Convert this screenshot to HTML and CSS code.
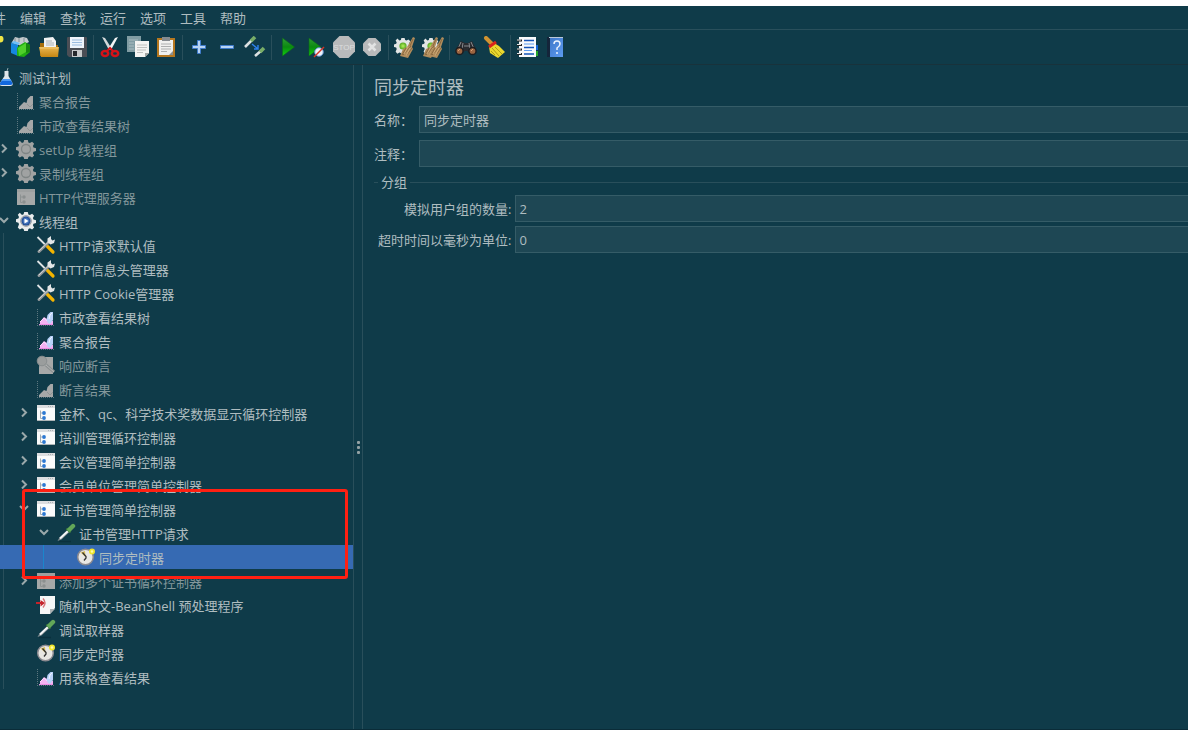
FILE: index.html
```
<!DOCTYPE html>
<html lang="zh-CN">
<head>
<meta charset="utf-8">
<title>同步定时器</title>
<link rel="stylesheet" href="styles.css">
</head>
<body>
<svg class="defs" aria-hidden="true">
  <defs>
    <linearGradient id="gGreen" x1="0" y1="0" x2="0" y2="1"><stop offset="0" stop-color="#2f9a35"/><stop offset=".5" stop-color="#0b8a10"/><stop offset="1" stop-color="#10d010"/></linearGradient>
    <linearGradient id="gFold" x1="0" y1="0" x2="0" y2="1"><stop offset="0" stop-color="#e9b650"/><stop offset="1" stop-color="#c58612"/></linearGradient>
    <linearGradient id="gBook" x1="0" y1="0" x2="1" y2="1"><stop offset="0" stop-color="#3f78c9"/><stop offset="1" stop-color="#5c9af0"/></linearGradient>
    <radialGradient id="gBall"><stop offset="0" stop-color="#b8f060"/><stop offset="1" stop-color="#4fa51c"/></radialGradient>
    <radialGradient id="gBlue"><stop offset="0" stop-color="#7fb0ee"/><stop offset="1" stop-color="#123f8c"/></radialGradient>
  </defs>
  <symbol id="flask" viewBox="0 0 20 20"><path d="M8.500 4h4v5l4 7q1 3-2 3H6q-3 0-2-3l4.500-7z" fill="#dfe6ea"/><path d="M7 12h7l2.500 4q.5 2-2 2H6q-3 0-2-2z" fill="#1268dd"/><path d="M6.500 12h8l1 2h-10z" fill="#4d9bf5"/><path d="M11 4l1-3" stroke="#8fa3aa"/></symbol>
  <symbol id="chart" viewBox="0 0 20 20"><path d="M1.500 2v17M1 18.500h17" stroke="#5d777f" stroke-dasharray="1 1"/><path d="M4 17v-2l4-5 3 2 6 2v4H3z" fill="#f3b2f2"/><path d="M4 15l4-4 3 3" fill="none" stroke="#fbdcfa"/><path d="M10.500 13l1-5 3-3h2.500v8l-3 4-2-1z" fill="#b9d2fa"/><path d="M13 12l1-4 2-2" fill="none" stroke="#eef5ff"/><path d="M3 17h14v1H3z" fill="#e98be2"/></symbol>
  <symbol id="chart-off" viewBox="0 0 20 20"><path d="M1.500 2v17M1 18.500h17" stroke="#5d777f" stroke-dasharray="1 1"/><path d="M3 18v-2l5-5 2.500 1 1-4 3-3h2.500v13z" fill="#a6a8a8"/><path d="M11 13l3 3 3-3" fill="none" stroke="#8f9494"/></symbol>
  <symbol id="gear" viewBox="0 0 20 20"><path d="M8.200 1h3.600l.6 2.400 1.500.6 2.200-1.200 2 2-1.200 2.200.6 1.600 2.500.6v2.800l-2.500.7-.6 1.600 1.200 2.200-2 2-2.200-1.200-1.500.6-.6 2.100H8.200l-.6-2.100-1.600-.6-2.200 1.200-2-2L3 13.300l-.6-1.600L0 11V8.200l2.400-.6L3 6 1.800 3.800l2-2L6 3.900l1.600-.6z"/></symbol>
  <symbol id="gear-off" viewBox="0 0 20 20"><use href="#gear" fill="#a0a2a2"/><circle cx="10" cy="10" r="4.500" fill="#a0a2a2" stroke="#7f8585" stroke-width="1.300"/></symbol>
  <symbol id="gear-on" viewBox="0 0 20 20"><use href="#gear" fill="#e9ebec"/><circle cx="10" cy="10" r="5.300" fill="#c9ced4" stroke="#91979d"/><circle cx="10" cy="10" r="4.500" fill="url(#gBlue)"/><path d="M8.500 7.500l4 2.500-4 2.500z" fill="#fff"/></symbol>
  <symbol id="tools" viewBox="0 0 20 20"><path d="M1.500 2l9 9" stroke="#dfe4e6" stroke-width="1.800"/><path d="M11.500 11.500l5.500 5.500" stroke="#f4b400" stroke-width="3.200" stroke-linecap="round"/><path d="M3 16.500L13 7" stroke="#8f9597" stroke-width="3" stroke-linecap="round"/><path d="M3 16L13 6.500" stroke="#d3d7d8" stroke-width="1" stroke-linecap="round"/><path d="M11.500 7V3.500L15 1v3l1.500 1.500L19 4.500 18 8l-3.500 1.500z" fill="#e3e6e7"/></symbol>
  <symbol id="assert" viewBox="0 0 20 20"><path d="M4 2h13v17H3v-6z" fill="#a6a8a8"/><circle cx="6" cy="6" r="4.800" fill="#9a9d9d" stroke="#888e8f"/><path d="M10 10l8 7" stroke="#8b9091" stroke-width="3"/><path d="M10 10l8 7" stroke="#b3b5b5"/></symbol>
  <symbol id="ctl" viewBox="0 0 20 20"><path d="M1 2h18v16H1z" fill="#fafbfb"/><path d="M1 2h18v3H1z" fill="#dcdee0"/><path d="M1 17h18v1H1z" fill="#aeb5b7"/><path d="M12 3.500h1m1 0h1m1 0h1" stroke="#b0b5b8"/><path d="M4.500 7.500v8h2M4.500 10h2" fill="none" stroke="#a3acb4"/><circle cx="8" cy="10" r="1.900" fill="#2c78d2"/><circle cx="8" cy="15" r="1.900" fill="#2c78d2"/></symbol>
  <symbol id="ctl-off" viewBox="0 0 20 20"><path d="M1 2h18v16H1z" fill="#a6a8a8"/><path d="M1 2h18v3H1z" fill="#9da0a0"/><path d="M4.500 7.500v8h2M4.500 10h2" fill="none" stroke="#8d9292"/><circle cx="8" cy="10" r="1.700" fill="#8a8f8f"/><circle cx="8" cy="15" r="1.700" fill="#8a8f8f"/></symbol>
  <symbol id="pipette" viewBox="0 0 20 20"><path d="M3 18.500h12" stroke="#0a303d" stroke-width="1.500"/><path d="M1.500 18l2-3.500L12 6.500l2 2-8.500 8z" fill="#7f8b90"/><path d="M4 15.500l8-7.500" stroke="#f4f6f7" stroke-width="2"/><path d="M10.500 5.500l4 4" stroke="#3f7f3c" stroke-width="2.200"/><path d="M13.500 6.500l3.500-3.500" stroke="#63a758" stroke-width="4.400" stroke-linecap="round"/></symbol>
  <symbol id="clock" viewBox="0 0 20 20"><circle cx="9.500" cy="10" r="7.800" fill="#e9e7e3" stroke="#8c8a90" stroke-width="1.500"/><path d="M9.500 10L4.500 5.500 9 4z" fill="#dcbd5a"/><path d="M6.500 5.500l3.500 4v1.500l-2 2.500" stroke="#333" fill="none" stroke-width="1.300"/><circle cx="16" cy="4.500" r="3" fill="#f0e52c"/><circle cx="16" cy="4.500" r="1.300" fill="#fffca8"/></symbol>
  <symbol id="pre" viewBox="0 0 20 20"><path d="M4 1h15v12l-5 6H4z" fill="#f6f7f7"/><path d="M14 19v-5h5z" fill="#abb1b3"/><path d="M0 7h4.500V5L9 8l-4.500 3.500V9H0z" fill="#c5232b"/><path d="M7 3.500q4 4.500 0 9" stroke="#d9777b" stroke-width="1.500" fill="none"/></symbol>
  <symbol id="right" viewBox="0 0 14 14"><path d="M5 2.500l4 4-4 4" fill="none" stroke="#9aa8aa" stroke-width="2"/></symbol>
  <symbol id="down" viewBox="0 0 14 14"><path d="M3 4l4 4 4-4" fill="none" stroke="#9aa8aa" stroke-width="2"/></symbol>
  <symbol id="brush" viewBox="0 0 22 22"><path d="M18 1l2 1-3 9 1 2-5 9-8-2 3-7 4-2z" fill="#b08c5c"/><path d="M16 10l-8 9M17 12l-6 8M11 12l-4 7M18 3l-3 7" stroke="#806039" stroke-width=".8"/><path d="M13 11l-4 7M15 12l-4 8" stroke="#d9b783" stroke-width=".8"/></symbol>
</svg>

<header class="top">
  <nav class="menu" aria-label="菜单">
    <button>文件</button><button>编辑</button><button>查找</button><button>运行</button><button>选项</button><button>工具</button><button>帮助</button>
  </nav>
  <div class="toolbar" role="toolbar">
    <button aria-label="新建"><svg viewBox="0 0 22 22"><path d="M3 2h15v18H3z" fill="#f5f6f4"/><circle cx="18" cy="3" r="3.500" fill="#eee545"/></svg></button>
    <button aria-label="模板"><svg viewBox="0 0 22 22"><path d="M2 6l3-5 4 1 4-1 4 1 2 4-8 4z" fill="#c4cacd"/><path d="M5 2v4m4-4v4m5-4v4" stroke="#829098"/><path d="M1 7l7 2v11l-7-3z" fill="#1687df"/><path d="M1 7l3-2 6 2-2 2z" fill="#6dc0fa"/><path d="M7 12l3-3 5-3 5 3v7l-6 5-7-1z" fill="#21ad12"/><path d="M8 12l8-5v9l-7 4z" fill="#4fd02a"/><path d="M16 7l4 2v7l-4 1z" fill="#16870e"/></svg></button>
    <button aria-label="打开"><svg viewBox="0 0 22 22"><path d="M2 7h5l1 2h12v11H2z" fill="#a86f0b"/><path d="M6 2l9-1 3 4v9H6z" fill="#f1f3f4"/><path d="M8 5h6M8 7h8M8 9h8" stroke="#a9b0b4"/><path d="M1 11h20l-1 10H3z" fill="url(#gFold)"/><path d="M2 12h18" stroke="#f3cb74"/></svg></button>
    <button aria-label="保存"><svg viewBox="0 0 22 22"><path d="M2 1h18q1 0 1 1v19H3l-2-2V2q0-1 1-1z" fill="#4b4e55"/><path d="M4 1h14v11H4z" fill="#eef4fb"/><path d="M6 4h10M6 6.500h10M6 9h10" stroke="#9bbce0"/><path d="M6 14h10v7H6z" fill="#c7cacb"/><path d="M7 15h4v5H7z" fill="#25282c"/></svg></button>
    <i class="sep"></i>
    <button aria-label="剪切"><svg viewBox="0 0 22 22"><path d="M3 1l3 1 7 11-3 1z" fill="#d3d8da"/><path d="M19 1l-3 1-7 11 3 1z" fill="#f4f5f5"/><ellipse cx="6" cy="17.500" rx="3.200" ry="2.600" fill="none" stroke="#d61218" stroke-width="2.500"/><ellipse cx="16" cy="17.500" rx="3.200" ry="2.600" fill="none" stroke="#d61218" stroke-width="2.500"/><path d="M8 15l3-3 3 3" fill="none" stroke="#d61218" stroke-width="2"/></svg></button>
    <button aria-label="复制"><svg viewBox="0 0 22 22"><path d="M0 0h14v16H0z" fill="#809ca3"/><path d="M2 4h9M2 7h5M2 10h5M2 13h5" stroke="#a9bcc0"/><path d="M8 5h14v12l-4 4H8z" fill="#f4f4f2"/><path d="M10 9h10M10 11.500h10M10 14h9M10 16.500h6" stroke="#c0c2c0"/><path d="M18 21v-4h4z" fill="#a5a7a4"/></svg></button>
    <button aria-label="粘贴"><svg viewBox="0 0 22 22"><path d="M2 2h18v19H2z" fill="#b67820"/><path d="M4 4h14v15H4z" fill="#f0f1ef"/><path d="M7 1h8v4H7z" fill="#858b8f"/><path d="M6 8h10M6 10.500h10M6 13h10M6 15.500h6" stroke="#adb0b0"/><path d="M14 19l4-4v4z" fill="#8c8f8f"/></svg></button>
    <i class="sep"></i>
    <button aria-label="展开"><svg viewBox="0 0 22 22"><path d="M9.500 4.500h3v5h5v3h-5v5h-3v-5h-5v-3h5z" fill="#b8d4f5" stroke="#3e7bcb"/></svg></button>
    <button aria-label="折叠"><svg viewBox="0 0 22 22"><path d="M4.500 9.500h13v3h-13z" fill="#b8d4f5" stroke="#3e7bcb"/></svg></button>
    <button aria-label="切换"><svg viewBox="0 0 22 22"><path d="M1 11l7-7M11 20l7-6" stroke="#dce1e2" stroke-width="2.600"/><path d="M7 5l4-4M16 16l4-4" stroke="#78ad68" stroke-width="3.600"/><path d="M8 8l6 5M14 9v4h-4" stroke="#2e82ed" stroke-width="1.400" fill="none"/></svg></button>
    <i class="sep"></i>
    <button aria-label="启动"><svg viewBox="0 0 22 22"><path d="M5.500 2l12 9-12 9z" fill="url(#gGreen)" stroke="#0b6a1a" stroke-width=".6"/></svg></button>
    <button aria-label="不停顿开始"><svg viewBox="0 0 22 22"><path d="M4 2l12 9-12 9z" fill="url(#gGreen)" stroke="#0b6a1a" stroke-width=".6"/><circle cx="14" cy="16" r="4.300" fill="#eef3fb" stroke="#5b8cc9"/><path d="M9 21l10-10" stroke="#d43424" stroke-width="1.400"/></svg></button>
    <button aria-label="停止"><svg viewBox="0 0 22 22"><path d="M6.500 0h9L22 6.500v9L15.500 22h-9L0 15.500v-9z" fill="#b9babb"/><text x="11" y="14" class="stop-text">STOP</text></svg></button>
    <button aria-label="关闭"><svg viewBox="0 0 22 22"><path d="M7.500 2h7L20 7.500v7L14.500 20h-7L2 14.500v-7z" fill="#b9babb"/><path d="M7.500 7.500l7 7m0-7l-7 7" stroke="#e2e3e3" stroke-width="2.600"/></svg></button>
    <i class="sep"></i>
    <button aria-label="清除"><svg viewBox="0 0 22 22"><use href="#gear" width="18" height="18" y="1" fill="#e2e5e5"/><circle cx="9" cy="10" r="3.600" fill="url(#gBall)"/><use href="#brush" x="1"/></svg></button>
    <button aria-label="清除全部"><svg viewBox="0 0 22 22"><use href="#gear" width="18" height="18" y="1" fill="#e2e5e5"/><circle cx="9" cy="10" r="3.600" fill="url(#gBall)"/><use href="#brush" x="-4"/><use href="#brush" x="2"/></svg></button>
    <i class="sep"></i>
    <button aria-label="搜索"><svg viewBox="0 0 22 22"><path d="M6 5l4 2h3l4-2 4 8-4 5-5-3h-2l-5 3-4-5z" fill="#292b2f"/><path d="M6 6l-3 7M8 7l-1 6M16 6l3 7M14 7l1 6M9 10h5" stroke="#878a8e"/><circle cx="4.500" cy="15" r="3.600" fill="#9c6541" stroke="#1c1d20" stroke-width="1.500"/><circle cx="17.500" cy="15" r="3.600" fill="#9c6541" stroke="#1c1d20" stroke-width="1.500"/><path d="M3 15l2-2M16 15l2-2" stroke="#d9a178"/></svg></button>
    <button aria-label="重置搜索"><svg viewBox="0 0 22 22"><path d="M3 2l6 6" stroke="#d19331" stroke-width="4" stroke-linecap="round"/><path d="M11 7l5 3 6 6-7 6-8-5-1-6z" fill="#ead82e"/><path d="M9 12l7 8M12 11l7 7M8 15l4 4" stroke="#a69513" stroke-width=".9"/><path d="M6 11l7-5" stroke="#d8251c" stroke-width="3"/></svg></button>
    <i class="sep"></i>
    <button aria-label="函数助手"><svg viewBox="0 0 22 22"><path d="M17 9h5v5h-5z" fill="#1465d8"/><path d="M17 15h5v5h-5z" fill="#27a72a"/><path d="M3 1h17v20H3z" fill="#f7f9fc"/><path d="M8 4.500h10M8 11.500h10M8 18h10" stroke="#1655b8" stroke-width="1.400"/><path d="M8 8h10M8 14.500h8" stroke="#5c9cf0"/><path d="M1 4.500h5M1 9h5M1 13.500h5M1 18h5" stroke="#222" stroke-width="2.200"/><path d="M1 4h4M1 8.500h4M1 13h4M1 17.500h4" stroke="#e3e5e6"/></svg></button>
    <button aria-label="帮助"><svg viewBox="0 0 22 22"><path d="M3 1h16v20H3z" fill="#14253a"/><path d="M6 2h13v19H6z" fill="url(#gBook)"/><path d="M5 1.500h14" stroke="#b9c8d9"/><path d="M10 8q0-3 3-3t3 3q0 2-3 4v2m0 2v2" fill="none" stroke="#eaf2fd" stroke-width="1.500"/></svg></button>
  </div>
</header>

<main class="split">
  <aside class="side">
    <div class="tree" role="tree">
      <div class="row l0" role="treeitem"><svg class="arrow"></svg><svg class="ico"><use href="#flask"/></svg><span>测试计划</span></div>
      <div class="row l1 off" role="treeitem"><svg class="arrow"></svg><svg class="ico"><use href="#chart-off"/></svg><span>聚合报告</span></div>
      <div class="row l1 off" role="treeitem"><svg class="arrow"></svg><svg class="ico"><use href="#chart-off"/></svg><span>市政查看结果树</span></div>
      <div class="row l1 off" role="treeitem"><svg class="arrow"><use href="#right"/></svg><svg class="ico"><use href="#gear-off"/></svg><span>setUp 线程组</span></div>
      <div class="row l1 off" role="treeitem"><svg class="arrow"><use href="#right"/></svg><svg class="ico"><use href="#gear-off"/></svg><span>录制线程组</span></div>
      <div class="row l1 off" role="treeitem"><svg class="arrow"></svg><svg class="ico"><use href="#ctl-off"/></svg><span>HTTP代理服务器</span></div>
      <div class="row l1" role="treeitem"><svg class="arrow"><use href="#down"/></svg><svg class="ico"><use href="#gear-on"/></svg><span>线程组</span></div>
      <div class="group">
        <div class="row l2" role="treeitem"><svg class="arrow"></svg><svg class="ico"><use href="#tools"/></svg><span>HTTP请求默认值</span></div>
        <div class="row l2" role="treeitem"><svg class="arrow"></svg><svg class="ico"><use href="#tools"/></svg><span>HTTP信息头管理器</span></div>
        <div class="row l2" role="treeitem"><svg class="arrow"></svg><svg class="ico"><use href="#tools"/></svg><span>HTTP Cookie管理器</span></div>
        <div class="row l2" role="treeitem"><svg class="arrow"></svg><svg class="ico"><use href="#chart"/></svg><span>市政查看结果树</span></div>
        <div class="row l2" role="treeitem"><svg class="arrow"></svg><svg class="ico"><use href="#chart"/></svg><span>聚合报告</span></div>
        <div class="row l2 off" role="treeitem"><svg class="arrow"></svg><svg class="ico"><use href="#assert"/></svg><span>响应断言</span></div>
        <div class="row l2 off" role="treeitem"><svg class="arrow"></svg><svg class="ico"><use href="#chart-off"/></svg><span>断言结果</span></div>
        <div class="row l2" role="treeitem"><svg class="arrow"><use href="#right"/></svg><svg class="ico"><use href="#ctl"/></svg><span>金杯、qc、科学技术奖数据显示循环控制器</span></div>
        <div class="row l2" role="treeitem"><svg class="arrow"><use href="#right"/></svg><svg class="ico"><use href="#ctl"/></svg><span>培训管理循环控制器</span></div>
        <div class="row l2" role="treeitem"><svg class="arrow"><use href="#right"/></svg><svg class="ico"><use href="#ctl"/></svg><span>会议管理简单控制器</span></div>
        <div class="row l2" role="treeitem"><svg class="arrow"><use href="#right"/></svg><svg class="ico"><use href="#ctl"/></svg><span>会员单位管理简单控制器</span></div>
        <div class="marked">
          <div class="row l2" role="treeitem"><svg class="arrow"><use href="#down"/></svg><svg class="ico"><use href="#ctl"/></svg><span>证书管理简单控制器</span></div>
          <div class="row l3" role="treeitem"><svg class="arrow"><use href="#down"/></svg><svg class="ico"><use href="#pipette"/></svg><span>证书管理HTTP请求</span></div>
          <div class="row l4 selected" role="treeitem" aria-selected="true"><svg class="arrow"></svg><svg class="ico"><use href="#clock"/></svg><span>同步定时器</span></div>
        </div>
        <div class="row l2 off" role="treeitem"><svg class="arrow"><use href="#right"/></svg><svg class="ico"><use href="#ctl-off"/></svg><span>添加多个证书循环控制器</span></div>
        <div class="row l2" role="treeitem"><svg class="arrow"></svg><svg class="ico"><use href="#pre"/></svg><span>随机中文-BeanShell 预处理程序</span></div>
        <div class="row l2" role="treeitem"><svg class="arrow"></svg><svg class="ico"><use href="#pipette"/></svg><span>调试取样器</span></div>
        <div class="row l2" role="treeitem"><svg class="arrow"></svg><svg class="ico"><use href="#clock"/></svg><span>同步定时器</span></div>
        <div class="row l2" role="treeitem"><svg class="arrow"></svg><svg class="ico"><use href="#chart"/></svg><span>用表格查看结果</span></div>
      </div>
    </div>
  </aside>
  <div class="divider" role="separator"><i></i><i></i><i></i></div>
  <section class="panel">
    <h1>同步定时器</h1>
    <form>
      <div class="line"><label for="name">名称：</label><input id="name" type="text" value="同步定时器"></div>
      <div class="line"><label for="note">注释：</label><input id="note" type="text"></div>
      <fieldset>
        <legend>分组</legend>
        <div class="fields">
          <label for="count">模拟用户组的数量:</label><input id="count" type="text" value="2">
          <label for="timeout">超时时间以毫秒为单位:</label><input id="timeout" type="text" value="0">
        </div>
      </fieldset>
    </form>
  </section>
</main>
</body>
</html>
```
FILE: styles.css
```
:root {
  --bg: #0f3b49;
  --line: #294f5b;
  --text: #afbdc0;
  --muted: #83979b;
}
* { box-sizing: border-box; }
body {
  margin: 0;
  height: 100vh;
  padding-top: 6px;
  display: flex;
  flex-direction: column;
  overflow: hidden;
  background: #fff;
  color: var(--text);
  font: 13px/18px "Open Sans", "Noto Sans CJK SC", sans-serif;
}
button, input { font: inherit; color: inherit; }
.defs { position: absolute; width: 0; height: 0; }

.top { background: var(--bg); overflow: hidden; }
.menu {
  display: flex;
  height: 24px;
  margin-left: -27px;
  border-bottom: 1px solid var(--line);
}
.menu button { padding: 0 7px; border: 0; background: none; white-space: nowrap; }
.toolbar {
  display: flex;
  align-items: center;
  height: 35px;
  margin-left: -21px;
  border-bottom: 1px solid #18323b;
}
.toolbar button {
  flex: none;
  display: flex;
  justify-content: center;
  width: 28px;
  padding: 0;
  border: 0;
  background: none;
}
.toolbar svg { width: 22px; height: 22px; }
.sep { flex: none; width: 1px; height: 25px; margin: 0 2px; background: var(--line); }
.stop-text { font: 8px "Liberation Sans", sans-serif; fill: #dcdddd; text-anchor: middle; }

.split { flex: 1; min-height: 0; display: flex; background: var(--bg); border-bottom: 1px solid #0a2c38; }
.side { flex: none; width: 354px; border-right: 1px solid var(--line); }
.row {
  display: flex;
  align-items: center;
  height: 24px;
  overflow: hidden;
  white-space: nowrap;
}
.row span { margin: 2px 0 0 3px; }
.arrow { flex: none; width: 14px; height: 14px; margin: 0 5px 0 -23px; }
.ico { flex: none; width: 20px; height: 20px; }
.l1 { padding-left: 20px; }
.l2 { padding-left: 40px; }
.l3 { padding-left: 60px; }
.l4 { padding-left: 80px; }
.off { color: var(--muted); }
.group { background: linear-gradient(var(--line), var(--line)) 3px 0 / 1px 100% no-repeat; }
.selected { background: linear-gradient(#1b86cc, #1b86cc) 43px 0 / 1px 100% no-repeat #366ab3; }
.marked { position: relative; }
.marked::after {
  content: "";
  position: absolute;
  inset: -8px 5px -10px 22px;
  border: 3px solid #ff2012;
  border-radius: 3px;
}
.divider {
  flex: none;
  width: 9px;
  display: flex;
  flex-direction: column;
  justify-content: center;
  align-items: center;
  gap: 2px;
  padding-top: 100px;
  border-right: 1px solid var(--line);
}
.divider i { width: 3px; height: 3px; border-radius: 1px; background: #93a1a3; }

.panel { flex: 1; min-width: 0; overflow: hidden; padding: 10px 0 0 11px; }
h1 { margin: 0 0 7px; font-size: 18px; line-height: 24px; font-weight: 400; }
form { margin-right: -4px; }
.line { display: flex; align-items: center; margin-bottom: 7px; }
.line + fieldset { margin-top: -1px; }
.line label { width: 45px; }
input {
  flex: 1;
  min-width: 0;
  height: 27px;
  padding: 0 4px;
  border: 1px solid #355c67;
  border-radius: 0;
  background: #1e4754;
}
fieldset { min-width: 0; margin: 0; padding: 4px 0 0; border: 0; border-top: 1px solid var(--line); }
legend { margin-left: 4px; padding: 0 3px; }
.fields {
  display: grid;
  grid-template-columns: auto 1fr;
  align-items: center;
  gap: 4px;
  padding-left: 4px;
}
.fields label { text-align: right; }
.fields input { padding-left: 3px; }
```
